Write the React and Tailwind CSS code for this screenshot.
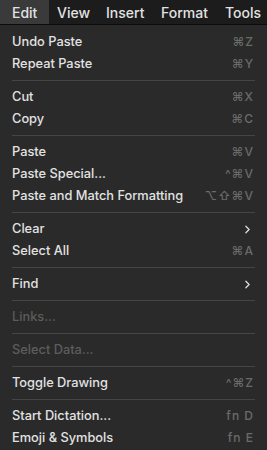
import { ChevronRight } from 'lucide-react';

const menus = [
  { label: 'Edit', cls: 'w-[49px] pl-[12px] bg-[#3a3a3a]' },
  { label: 'View', cls: 'w-[49px] pl-[8px]' },
  { label: 'Insert', cls: 'w-[55px] pl-[8px]' },
  { label: 'Format', cls: 'w-[64px] pl-[8px]' },
  { label: 'Tools', cls: 'flex-1 pl-[8px]' },
];

// null = separator
const items = [
  { label: 'Undo Paste', keys: '⌘Z' },
  { label: 'Repeat Paste', keys: '⌘Y' },
  null,
  { label: 'Cut', keys: '⌘X' },
  { label: 'Copy', keys: '⌘C' },
  null,
  { label: 'Paste', keys: '⌘V' },
  { label: 'Paste Special...', keys: '^⌘V' },
  { label: 'Paste and Match Formatting', keys: '⌥⇧⌘V' },
  null,
  { label: 'Clear', submenu: true },
  { label: 'Select All', keys: '⌘A' },
  null,
  { label: 'Find', submenu: true },
  null,
  { label: 'Links...', disabled: true },
  null,
  { label: 'Select Data...', disabled: true },
  null,
  { label: 'Toggle Drawing', keys: '^⌘Z' },
  null,
  { label: 'Start Dictation...', keys: 'fn D' },
  { label: 'Emoji & Symbols', keys: 'fn E' },
];

export default function App() {
  return (
    <div
      className="w-[267px] h-[450px] overflow-hidden bg-[#2a2a2a] text-[#e2e2e2]"
      style={{ fontFamily: 'Inter, "Noto Sans", sans-serif' }}
    >
      {/* Menu bar */}
      <div className="flex h-[25px] bg-[#1c1c1c] border-b border-[#0c0c0c] text-[14px] font-medium">
        {menus.map((m) => (
          <div key={m.label} className={`flex items-center h-full ${m.cls}`}>
            {m.label}
          </div>
        ))}
      </div>

      {/* Dropdown */}
      <div className="pt-[6px] text-[12.8px] font-medium">
        {items.map((item, i) =>
          item === null ? (
            <div key={i} className="h-[11px] flex items-center px-[12px]">
              <div className="h-px w-full bg-[#454545]" />
            </div>
          ) : (
            <div key={i} className="h-[22px] flex items-center justify-between pl-[12px] pr-[13px]">
              <span className={item.disabled ? 'text-[#5c5c5c]' : ''}>{item.label}</span>
              {item.submenu ? (
                <ChevronRight className="w-[13px] h-[13px] text-[#d8d8d8]" strokeWidth={2.5} />
              ) : (
                item.keys && (
                  <span className="text-[12px] text-[#6a6a6a] tracking-[1px]">{item.keys}</span>
                )
              )}
            </div>
          )
        )}
      </div>
    </div>
  );
}
